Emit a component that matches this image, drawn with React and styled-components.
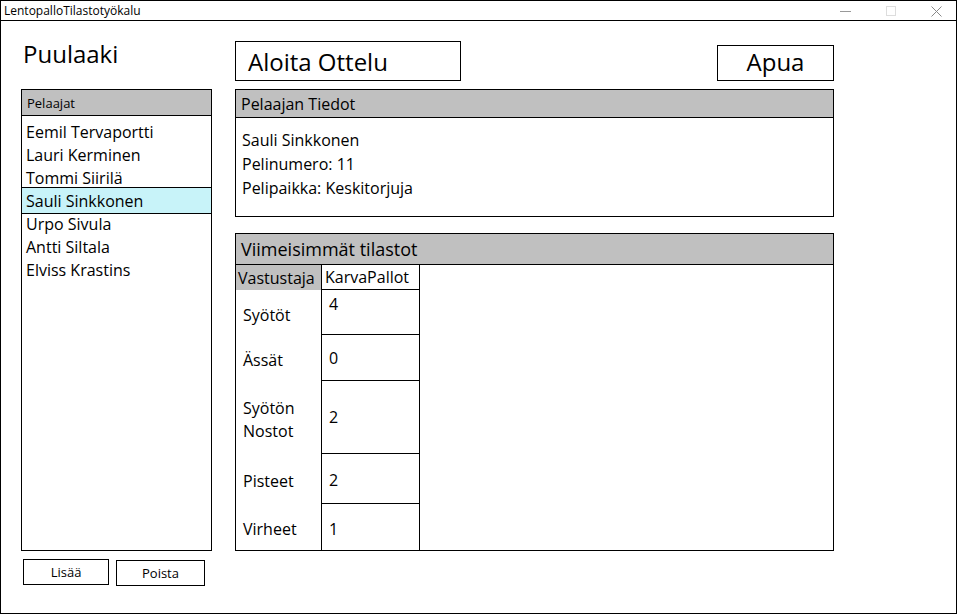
import React from 'react'
import styled, { createGlobalStyle } from 'styled-components'

const GlobalStyle = createGlobalStyle`
  html, body {
    margin: 0;
    padding: 0;
    background: #fff;
    overflow: hidden;
  }
  * {
    box-sizing: border-box;
  }
  body {
    font-family: "Open Sans", "Noto Sans", sans-serif;
    color: #000;
  }
`

const players = [
  'Eemil Tervaportti',
  'Lauri Kerminen',
  'Tommi Siirilä',
  'Sauli Sinkkonen',
  'Urpo Sivula',
  'Antti Siltala',
  'Elviss Krastins',
]

const stats = [
  { label: ['Syötöt'], value: '4', h: 45, nudge: -8 },
  { label: ['Ässät'], value: '0', h: 46, nudge: 0 },
  { label: ['Syötön', 'Nostot'], value: '2', h: 73, nudge: 0 },
  { label: ['Pisteet'], value: '2', h: 50, nudge: 1 },
  { label: ['Virheet'], value: '1', h: 46, nudge: 2, last: true },
]

const App = () => {
  const selected = 'Sauli Sinkkonen'
  return <>
    <GlobalStyle />
    <Frame>
      <TitleBar>
        <TitleText>LentopalloTilastotyökalu</TitleText>
        <Controls>
          <svg width="11" height="11" viewBox="0 0 11 11"><line x1="0" y1="5.5" x2="11" y2="5.5" stroke="#999" strokeWidth="1" /></svg>
          <svg width="10" height="10" viewBox="0 0 10 10"><rect x="0.5" y="0.5" width="9" height="9" fill="none" stroke="#ddd" strokeWidth="1" /></svg>
          <svg width="11" height="11" viewBox="0 0 11 11"><path d="M0.5 0.5 L10.5 10.5 M10.5 0.5 L0.5 10.5" stroke="#888" strokeWidth="1" /></svg>
        </Controls>
      </TitleBar>
      <Workspace>
        <TeamName>Puulaaki</TeamName>
        <TopActions>
          <BigButton $w={226} $h={40} $align="left">Aloita Ottelu</BigButton>
          <BigButton $w={117} $h={36} $align="center">Apua</BigButton>
        </TopActions>
        <LeftColumn>
          <Panel $h={462}>
            <PanelHeader $h={25} $size={13}>Pelaajat</PanelHeader>
            <PlayerList>
              {players.map((p) => (
                <PlayerItem key={p} $active={p === selected}>{p}</PlayerItem>
              ))}
            </PlayerList>
          </Panel>
          <ButtonRow>
            <SmallButton $w={86}>Lisää</SmallButton>
            <SmallButton $w={89} $drop={1}>Poista</SmallButton>
          </ButtonRow>
        </LeftColumn>
        <RightColumn>
          <Panel $h={128}>
            <PanelHeader $h={27} $size={16}>Pelaajan Tiedot</PanelHeader>
            <InfoBody>
              <div>Sauli Sinkkonen</div>
              <div>Pelinumero: 11</div>
              <div>Pelipaikka: Keskitorjuja</div>
            </InfoBody>
          </Panel>
          <Panel $h={318}>
            <PanelHeader $h={30} $size={18}>Viimeisimmät tilastot</PanelHeader>
            <StatsTable>
              <HeadLabel>Vastustaja</HeadLabel>
              <HeadValue>KarvaPallot</HeadValue>
              {stats.map((s) => (
                <React.Fragment key={s.label.join(' ')}>
                  <RowLabel $h={s.h}>
                    <div>{s.label.map((l) => <div key={l}>{l}</div>)}</div>
                  </RowLabel>
                  <RowValue $h={s.h} $last={s.last}>
                    <span style={{ transform: `translateY(${s.nudge}px)` }}>{s.value}</span>
                  </RowValue>
                </React.Fragment>
              ))}
            </StatsTable>
          </Panel>
        </RightColumn>
      </Workspace>
    </Frame>
  </>
}

const Frame = styled.div`
  width: 957px;
  height: 614px;
  border: 1px solid #000;
  display: flex;
  flex-direction: column;
`

const TitleBar = styled.div`
  height: 20px;
  border-bottom: 1px solid #000;
  display: flex;
  align-items: center;
  justify-content: space-between;
  padding-left: 3px;
`

const TitleText = styled.span`
  font-family: "Open Sans", sans-serif;
  font-size: 12px;
  line-height: 19px;
`

const Controls = styled.div`
  display: flex;
  align-items: center;
  gap: 35px;
  margin-right: 14px;
  padding-top: 1px;
`

const Workspace = styled.div`
  display: grid;
  grid-template-columns: 191px 599px;
  grid-template-rows: 68px auto;
  column-gap: 23px;
  padding-left: 20px;
`

const TeamName = styled.h1`
  margin: 0;
  padding: 17px 0 0 2px;
  font-size: 24px;
  font-weight: 400;
  line-height: 32px;
`

const TopActions = styled.div`
  display: flex;
  justify-content: space-between;
  align-items: flex-end;
  padding-bottom: 8px;
`

const BigButton = styled.div`
  width: ${(p) => p.$w}px;
  height: ${(p) => p.$h}px;
  border: 1px solid #000;
  display: flex;
  align-items: center;
  justify-content: ${(p) => (p.$align === 'center' ? 'center' : 'flex-start')};
  padding-left: ${(p) => (p.$align === 'center' ? 0 : 12)}px;
  padding-bottom: ${(p) => (p.$align === 'center' ? 3 : 0)}px;
  font-size: 24px;
`

const LeftColumn = styled.div`
  display: flex;
  flex-direction: column;
  gap: 8px;
`

const RightColumn = styled.div`
  display: flex;
  flex-direction: column;
  gap: 16px;
`

const Panel = styled.section`
  height: ${(p) => p.$h}px;
  border: 1px solid #000;
  display: flex;
  flex-direction: column;
`

const PanelHeader = styled.div`
  height: ${(p) => p.$h + 1}px;
  flex-shrink: 0;
  background: #c0c0c0;
  border-bottom: 1px solid #000;
  display: flex;
  align-items: center;
  padding-left: 5px;
  font-size: ${(p) => p.$size}px;
`

const PlayerList = styled.ul`
  list-style: none;
  margin: 0;
  padding: 4px 0 0;
`

const PlayerItem = styled.li`
  height: ${(p) => (p.$active ? 27 : 23)}px;
  margin: ${(p) => (p.$active ? '-2px 0' : '0')};
  padding-left: 4px;
  display: flex;
  align-items: center;
  font-size: 16px;
  background: ${(p) => (p.$active ? '#c8f3f9' : 'transparent')};
  border-top: ${(p) => (p.$active ? '1px solid #000' : 'none')};
  border-bottom: ${(p) => (p.$active ? '1px solid #000' : 'none')};
`

const ButtonRow = styled.div`
  display: flex;
  gap: 7px;
  padding-left: 2px;
`

const SmallButton = styled.div`
  width: ${(p) => p.$w}px;
  height: 26px;
  margin-top: ${(p) => p.$drop || 0}px;
  border: 1px solid #000;
  display: flex;
  align-items: center;
  justify-content: center;
  font-size: 13px;
`

const InfoBody = styled.div`
  padding: 10px 0 0 6px;
  font-size: 16px;
  line-height: 24px;
`

const StatsTable = styled.div`
  display: grid;
  grid-template-columns: 85px 99px;
  font-size: 16px;
`

const HeadLabel = styled.div`
  height: 25px;
  background: #c0c0c0;
  display: flex;
  align-items: center;
  padding-left: 2px;
`

const HeadValue = styled.div`
  height: 25px;
  border-left: 1px solid #000;
  border-right: 1px solid #000;
  border-bottom: 1px solid #000;
  display: flex;
  align-items: center;
  padding-left: 3px;
`

const RowLabel = styled.div`
  height: ${(p) => p.$h}px;
  display: flex;
  align-items: center;
  padding: 5px 0 0 7px;
  line-height: 23px;
`

const RowValue = styled.div`
  height: ${(p) => p.$h}px;
  border-left: 1px solid #000;
  border-right: 1px solid #000;
  border-bottom: ${(p) => (p.$last ? 'none' : '1px solid #000')};
  display: flex;
  align-items: center;
  padding-left: 7px;
`

export default App
